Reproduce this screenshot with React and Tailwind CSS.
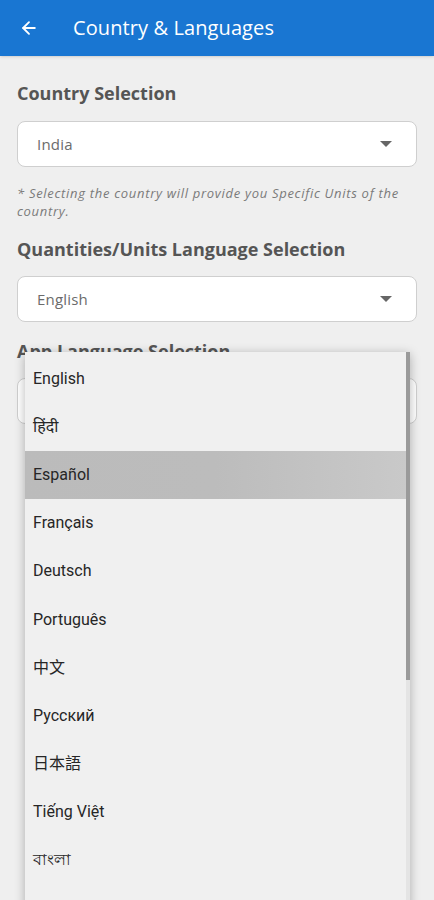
import { ArrowLeft } from 'lucide-react';

const languages = [
  'English',
  'हिंदी',
  'Español',
  'Français',
  'Deutsch',
  'Português',
  '中文',
  'Русский',
  '日本語',
  'Tiếng Việt',
  'বাংলা',
];

function Select({ value }) {
  return (
    <div className="h-[46px] rounded-lg border border-[#cfcfcf] bg-white flex items-center justify-between pl-[19px] pr-[24px]">
      <span className="text-[15px] text-[#6b6b6b] tracking-[0.2px]">{value}</span>
      <span className="w-0 h-0 border-l-[6px] border-r-[6px] border-t-[6px] border-l-transparent border-r-transparent border-t-[#666]" />
    </div>
  );
}

export default function App() {
  return (
    <div
      className="relative w-[434px] h-[900px] overflow-hidden bg-[#efefef]"
      style={{ fontFamily: '"Open Sans", "Noto Sans", sans-serif' }}
    >
      {/* Header */}
      <div className="h-[56px] bg-[#1976d2] flex items-center shadow-sm">
        <div className="w-[73px] pl-[19px]">
          <ArrowLeft size={20} strokeWidth={2.2} className="text-white" />
        </div>
        <h1 className="text-[20px] font-medium text-white tracking-[0.1px]">Country &amp; Languages</h1>
      </div>

      <div className="px-[17px] pt-[24px]">
        <h2 className="text-[18px] font-bold text-[#555] leading-[26px]">Country Selection</h2>
        <div className="mt-[15px]">
          <Select value="India" />
        </div>
        <p className="mt-[17px] pr-[8px] text-[13px] italic text-[#7a7a7a] leading-[18px] tracking-[0.7px]">
          * Selecting the country will provide you Specific Units of the country.
        </p>

        <h2 className="mt-[16px] text-[18px] font-bold text-[#555] leading-[26px]">
          Quantities/Units Language Selection
        </h2>
        <div className="mt-[14px]">
          <Select value="English" />
        </div>

        <h2 className="mt-[16px] text-[18px] font-bold text-[#555] leading-[26px]">App Language Selection</h2>
        <div className="mt-[14px]">
          <Select value="English" />
        </div>
      </div>

      {/* Open dropdown menu */}
      <div
        className="absolute left-[25px] top-[352px] w-[385px] h-[600px] bg-[#f0f0f0] shadow-[0_2px_10px_rgba(0,0,0,0.28)] flex"
        style={{ fontFamily: 'Roboto, "Noto Sans", "Noto Sans CJK SC", sans-serif' }}
      >
        <div className="flex-1 flex flex-col">
          {languages.map((lang) => (
            <div
              key={lang}
              className={`h-[48.1px] shrink-0 flex items-center pl-[8px] text-[16px] text-[#262626] ${
                lang === 'Español' ? 'bg-gradient-to-r from-[#bbbbbb] via-[#bcbcbc] to-[#c9c9c9]' : ''
              }`}
              style={{ marginTop: lang === 'English' ? '3px' : undefined }}
            >
              {lang}
            </div>
          ))}
        </div>
        <div className="w-[4px] flex flex-col">
          <div className="h-[328px] bg-[#9a9a9a]" />
          <div className="flex-1 bg-[#e4e4e4]" />
        </div>
      </div>
    </div>
  );
}
